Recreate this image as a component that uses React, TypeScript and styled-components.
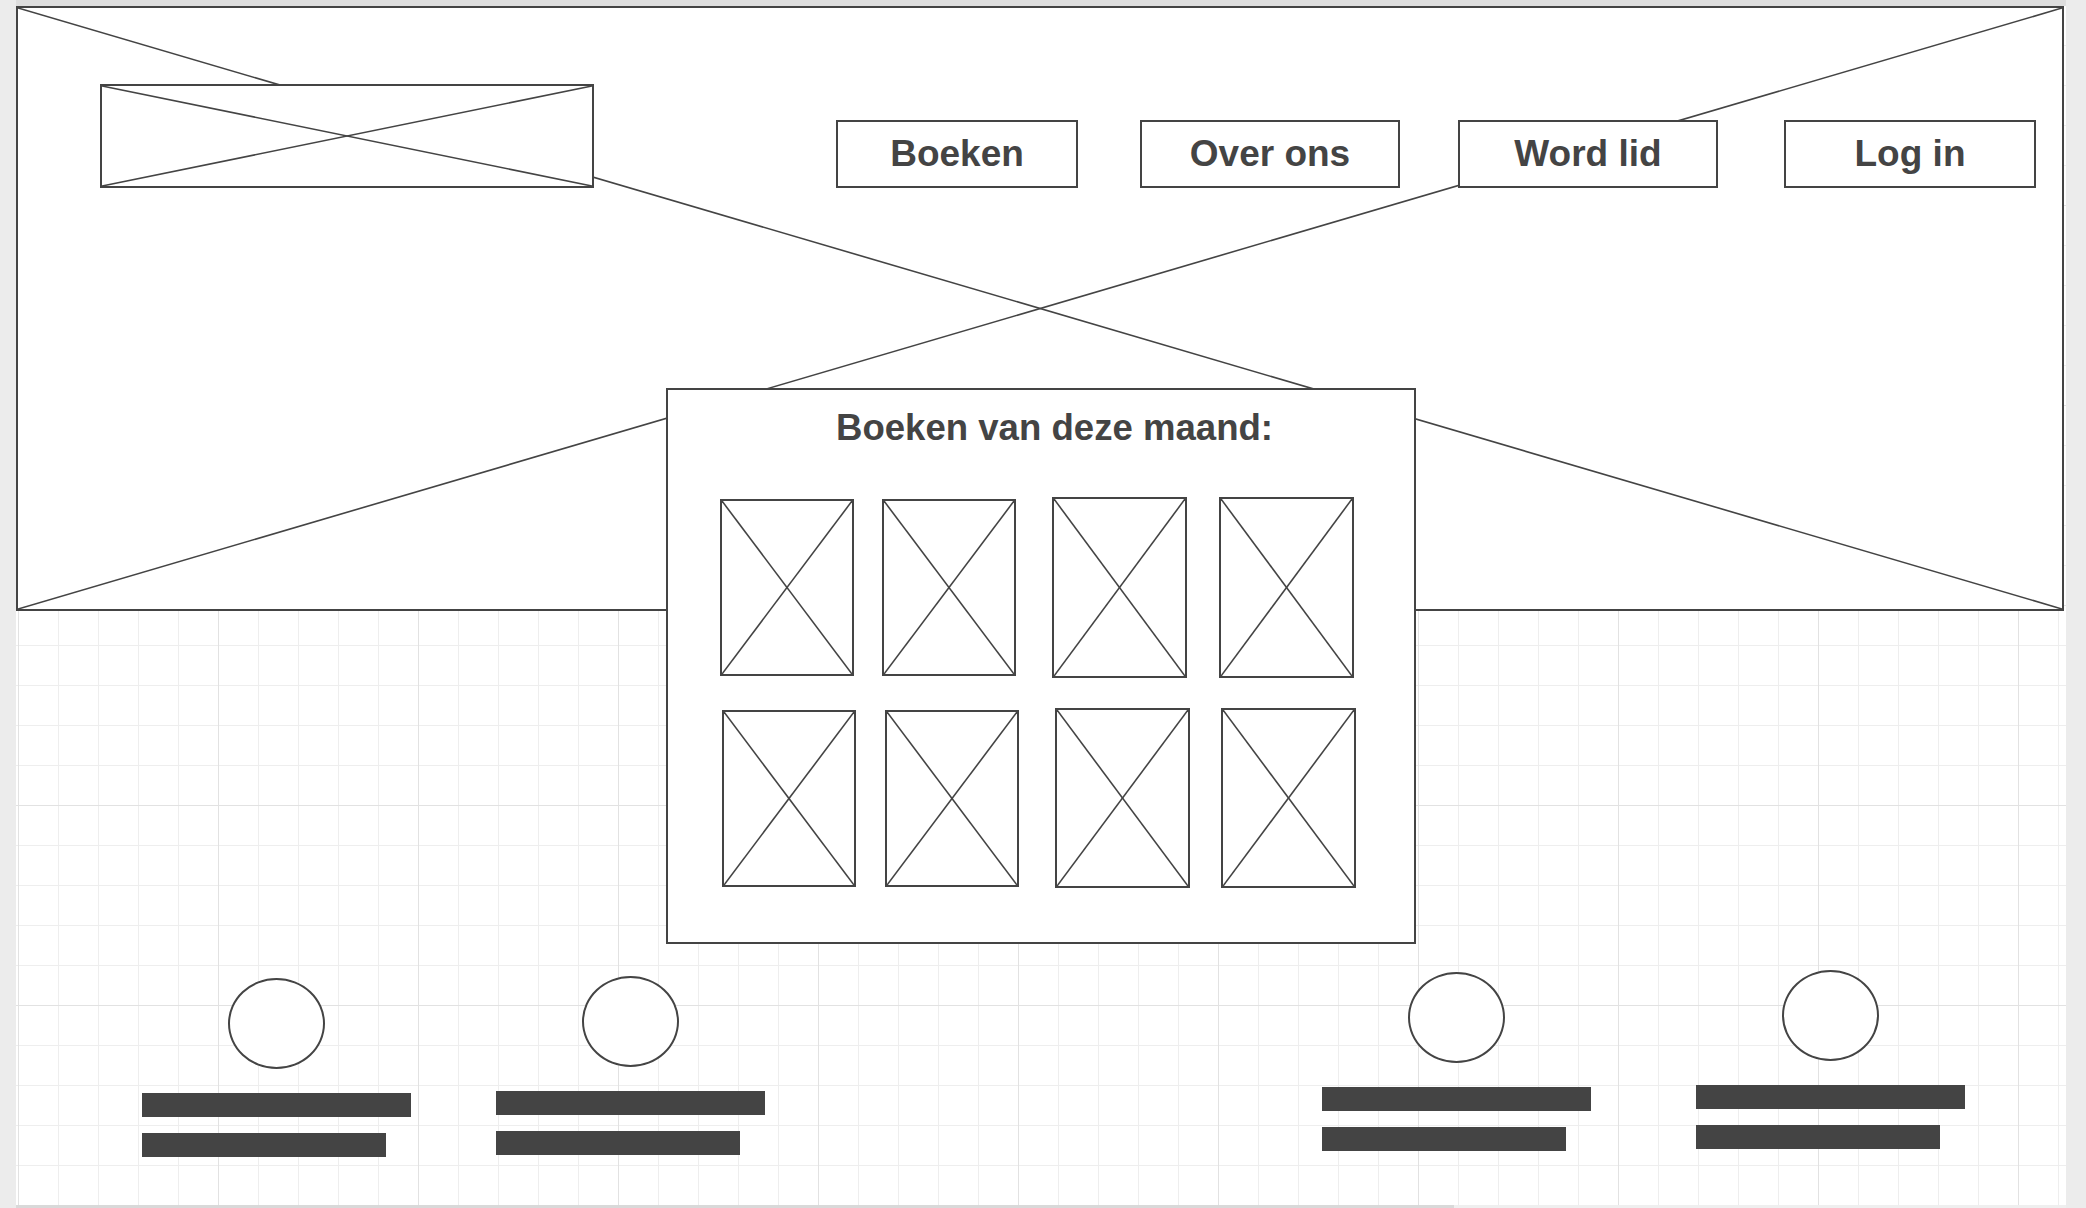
import * as React from "react";
import styled, { createGlobalStyle } from "styled-components";

const ink = "#444444";

const GlobalStyle = createGlobalStyle`
  *, *::before, *::after {
    box-sizing: border-box;
  }
  html, body {
    margin: 0;
    padding: 0;
    background: #ececec;
    overflow: hidden;
  }
  body {
    font-family: "Liberation Sans", Arial, Helvetica, sans-serif;
    color: ${ink};
  }
`;

const Frame = styled.div`
  display: flex;
  flex-direction: column;
  width: 2050px;
  height: 1208px;
  margin-left: 16px;
`;

const TopRuler = styled.div`
  height: 6px;
  flex-shrink: 0;
  background: #dedede;
`;

const Canvas = styled.div`
  flex: 1;
  display: flex;
  flex-direction: column;
  background-color: #fff;
  background-image: linear-gradient(to right, #e2e2e2 1px, transparent 1px),
    linear-gradient(to bottom, #e2e2e2 1px, transparent 1px),
    linear-gradient(to right, #eeeeee 1px, transparent 1px),
    linear-gradient(to bottom, #eeeeee 1px, transparent 1px);
  background-size: 200px 200px, 200px 200px, 40px 40px, 40px 40px;
  background-position: 2px -1px;
`;

const ScrollTrack = styled.div`
  height: 3px;
  flex-shrink: 0;
  background: #efefef;
`;

const ScrollThumb = styled.div`
  width: 1438px;
  height: 100%;
  background: #d9d9d9;
`;

// a wireframe placeholder: white box with a cross through it
const Placeholder = styled.div<{ $w: number; $h: number }>`
  position: relative;
  width: ${(p) => p.$w}px;
  height: ${(p) => p.$h}px;
  flex-shrink: 0;
  border: 2px solid ${ink};
  background: #fff;
`;

const CrossSvg = styled.svg`
  position: absolute;
  inset: 0;
  width: 100%;
  height: 100%;
  pointer-events: none;
`;

const Cross = ({ weight = 1.6 }: { weight?: number }) => (
  <CrossSvg viewBox="0 0 100 100" preserveAspectRatio="none">
    <line
      x1="0"
      y1="0"
      x2="100"
      y2="100"
      stroke={ink}
      strokeWidth={weight}
      vectorEffect="non-scaling-stroke"
    />
    <line
      x1="100"
      y1="0"
      x2="0"
      y2="100"
      stroke={ink}
      strokeWidth={weight}
      vectorEffect="non-scaling-stroke"
    />
  </CrossSvg>
);

const Hero = styled.div`
  position: relative;
  width: 2048px;
  height: 605px;
  flex-shrink: 0;
  border: 2px solid ${ink};
  background: #fff;
`;

const Header = styled.div`
  position: relative;
  display: flex;
  align-items: flex-end;
  padding: 76px 26px 0 82px;
`;

const Nav = styled.nav`
  display: flex;
  margin-left: auto;
`;

const NavButton = styled.div<{ $w: number; $gap: number }>`
  display: flex;
  align-items: center;
  justify-content: center;
  width: ${(p) => p.$w}px;
  height: 68px;
  margin-left: ${(p) => p.$gap}px;
  border: 2px solid ${ink};
  background: #fff;
  font-size: 37px;
  font-weight: 700;
  color: ${ink};
`;

const BooksPanel = styled.section`
  position: relative;
  z-index: 1;
  width: 750px;
  height: 556px;
  margin: -223px auto 0;
  padding: 17px 60px 0 52px;
  border: 2px solid ${ink};
  background: #fff;
`;

const PanelTitle = styled.h2`
  margin: 0 0 49px;
  padding-left: 35px;
  text-align: center;
  font-size: 36.6px;
  font-weight: 700;
  line-height: 41px;
  color: ${ink};
  white-space: nowrap;
`;

const BookRows = styled.div`
  display: flex;
  flex-direction: column;
  gap: 30px;
`;

const BookRow = styled.div<{ $indent: number }>`
  display: flex;
  align-items: center;
  padding-left: ${(p) => p.$indent}px;
`;

const Book = styled(Placeholder)<{ $gap: number }>`
  margin-left: ${(p) => p.$gap}px;
`;

const Profiles = styled.div`
  display: flex;
  justify-content: space-between;
  align-items: flex-start;
  margin-top: 26px;
  padding: 0 101px 0 126px;
`;

const ProfileGroup = styled.div<{ $gap: number }>`
  display: flex;
  align-items: flex-start;
  gap: ${(p) => p.$gap}px;
`;

const Profile = styled.div<{ $drop: number }>`
  display: flex;
  flex-direction: column;
  align-items: center;
  width: 269px;
  margin-top: ${(p) => p.$drop}px;
`;

const Avatar = styled.div`
  width: 97px;
  height: 91px;
  border: 2px solid ${ink};
  border-radius: 50%;
  background: #fff;
  margin-bottom: 24px;
`;

const TextLine = styled.div<{ $w: number }>`
  align-self: flex-start;
  width: ${(p) => p.$w}px;
  height: 24px;
  background: ${ink};
  & + & {
    margin-top: 16px;
  }
`;

const navItems = [
  { label: "Boeken", width: 242, gap: 0 },
  { label: "Over ons", width: 260, gap: 62 },
  { label: "Word lid", width: 260, gap: 58 },
  { label: "Log in", width: 252, gap: 66 },
];

type BookSpec = { w: number; h: number; gap: number };

const bookRows: { indent: number; books: BookSpec[] }[] = [
  {
    indent: 0,
    books: [
      { w: 134, h: 177, gap: 0 },
      { w: 134, h: 177, gap: 28 },
      { w: 135, h: 181, gap: 36 },
      { w: 135, h: 181, gap: 32 },
    ],
  },
  {
    indent: 2,
    books: [
      { w: 134, h: 177, gap: 0 },
      { w: 134, h: 177, gap: 29 },
      { w: 135, h: 180, gap: 36 },
      { w: 135, h: 180, gap: 31 },
    ],
  },
];

const ProfileCard = ({ drop }: { drop: number }) => (
  <Profile $drop={drop}>
    <Avatar />
    <TextLine $w={269} />
    <TextLine $w={244} />
  </Profile>
);

export default function App() {
  return (
    <>
      <GlobalStyle />
      <Frame>
        <TopRuler />
        <Canvas>
          <Hero>
            <Cross />
            <Header>
              <Placeholder $w={494} $h={104}>
                <Cross />
              </Placeholder>
              <Nav>
                {navItems.map((item) => (
                  <NavButton key={item.label} $w={item.width} $gap={item.gap}>
                    {item.label}
                  </NavButton>
                ))}
              </Nav>
            </Header>
          </Hero>

          <BooksPanel>
            <PanelTitle>Boeken van deze maand:</PanelTitle>
            <BookRows>
              {bookRows.map((row, r) => (
                <BookRow key={r} $indent={row.indent}>
                  {row.books.map((b, i) => (
                    <Book key={i} $w={b.w} $h={b.h} $gap={b.gap}>
                      <Cross />
                    </Book>
                  ))}
                </BookRow>
              ))}
            </BookRows>
          </BooksPanel>

          <Profiles>
            <ProfileGroup $gap={85}>
              <ProfileCard drop={8} />
              <ProfileCard drop={6} />
            </ProfileGroup>
            <ProfileGroup $gap={105}>
              <ProfileCard drop={2} />
              <ProfileCard drop={0} />
            </ProfileGroup>
          </Profiles>
        </Canvas>
        <ScrollTrack>
          <ScrollThumb />
        </ScrollTrack>
      </Frame>
    </>
  );
}
